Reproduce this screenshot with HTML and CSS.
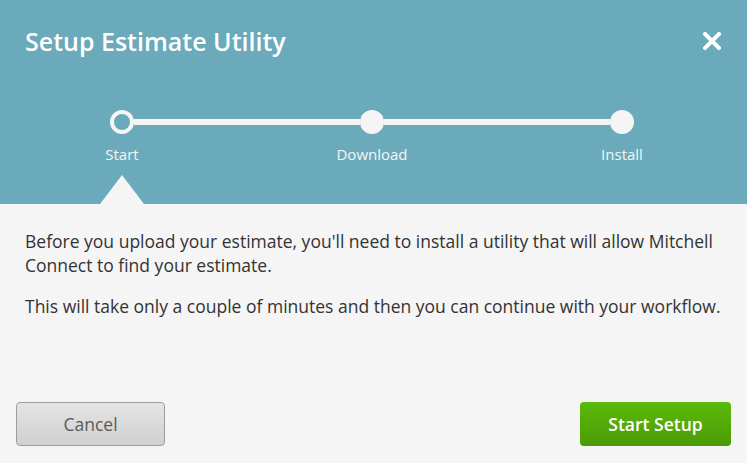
FILE: index.html
```html
<!DOCTYPE html>
<html lang="en">
<head>
  <meta charset="UTF-8">
  <meta name="viewport" content="width=device-width, initial-scale=1.0">
  <title>Setup Estimate Utility</title>
  <link rel="stylesheet" href="styles.css">
</head>
<body>
  <div class="dialog">
    <div class="dialog-header">
      <div class="title-row">
        <h1>Setup Estimate Utility</h1>
        <button class="close" aria-label="Close">
          <svg width="18" height="18" viewBox="0 0 18 18">
            <path d="M2 2 L16 16 M16 2 L2 16" stroke="#ffffff" stroke-width="4" stroke-linecap="square"/>
          </svg>
        </button>
      </div>

      <div class="stepper">
        <div class="step current">
          <span class="dot"></span>
          <span class="label">Start</span>
          <span class="pointer"></span>
        </div>
        <div class="connector"></div>
        <div class="step">
          <span class="dot"></span>
          <span class="label">Download</span>
        </div>
        <div class="connector"></div>
        <div class="step">
          <span class="dot"></span>
          <span class="label">Install</span>
        </div>
      </div>
    </div>

    <div class="dialog-body">
      <p>Before you upload your estimate, you'll need to install a utility that will allow Mitchell Connect to find your estimate.</p>
      <p>This will take only a couple of minutes and then you can continue with your workflow.</p>
    </div>

    <div class="dialog-footer">
      <button class="btn btn-cancel">Cancel</button>
      <button class="btn btn-primary">Start Setup</button>
    </div>
  </div>
</body>
</html>
```

FILE: styles.css
```css
body {
  font-family: "Open Sans", "Liberation Sans", sans-serif;
  background: #f5f5f5;
  margin: 0;
  color: #333333;
}

.dialog {
  display: flex;
  flex-direction: column;
  height: 463px;
}

.dialog-header {
  background: #6aaabb;
  height: 204px;
  display: flex;
  flex-direction: column;
}

.title-row {
  display: flex;
  justify-content: space-between;
  align-items: center;
  padding: 26px 25px 0 25px;
}

h1 {
  margin: 0;
  font-size: 25px;
  font-weight: 600;
  line-height: 30px;
  color: #ffffff;
}

.close {
  background: none;
  border: none;
  padding: 0;
  width: 18px;
  height: 18px;
  margin-right: 1px;
  cursor: pointer;
  display: flex;
}

.stepper {
  flex: 1;
  display: flex;
  padding: 54px 0 0 72px;
}

.step {
  width: 100px;
  flex-shrink: 0;
  display: flex;
  flex-direction: column;
  align-items: center;
}

.dot {
  position: relative;
  z-index: 1;
  width: 24px;
  height: 24px;
  border-radius: 50%;
  background: #f5f5f5;
  box-sizing: border-box;
}

.step.current .dot {
  background: #6aaabb;
  border: 4px solid #f5f5f5;
}

.label {
  margin-top: 10px;
  font-size: 15px;
  line-height: 20px;
  color: #f5f5f5;
}

.pointer {
  margin-top: auto;
  width: 0;
  height: 0;
  border-left: 22px solid transparent;
  border-right: 22px solid transparent;
  border-bottom: 29px solid #f5f5f5;
}

.connector {
  flex-shrink: 0;
  width: 226px;
  margin: 9px -38px 0 -38px;
  height: 6px;
  background: #f5f5f5;
}

.dialog-body {
  flex: 1;
  padding: 25px 25px 0 25px;
}

.dialog-body p {
  margin: 0 0 17px 0;
  font-size: 17.5px;
  line-height: 24px;
}

.dialog-footer {
  display: flex;
  justify-content: space-between;
  padding: 0 16px 17px 16px;
}

.btn {
  height: 44px;
  border-radius: 4px;
  font-family: "Open Sans", "Liberation Sans", sans-serif;
  font-size: 17.5px;
  cursor: pointer;
}

.btn-cancel {
  width: 149px;
  background: linear-gradient(#e4e4e4, #d0d0d0);
  border: 1px solid #9e9e9e;
  color: #5a5a5a;
}

.btn-primary {
  width: 151px;
  background: linear-gradient(#5cba0b, #4c9a05);
  border: none;
  color: #ffffff;
  font-weight: 600;
}
```
